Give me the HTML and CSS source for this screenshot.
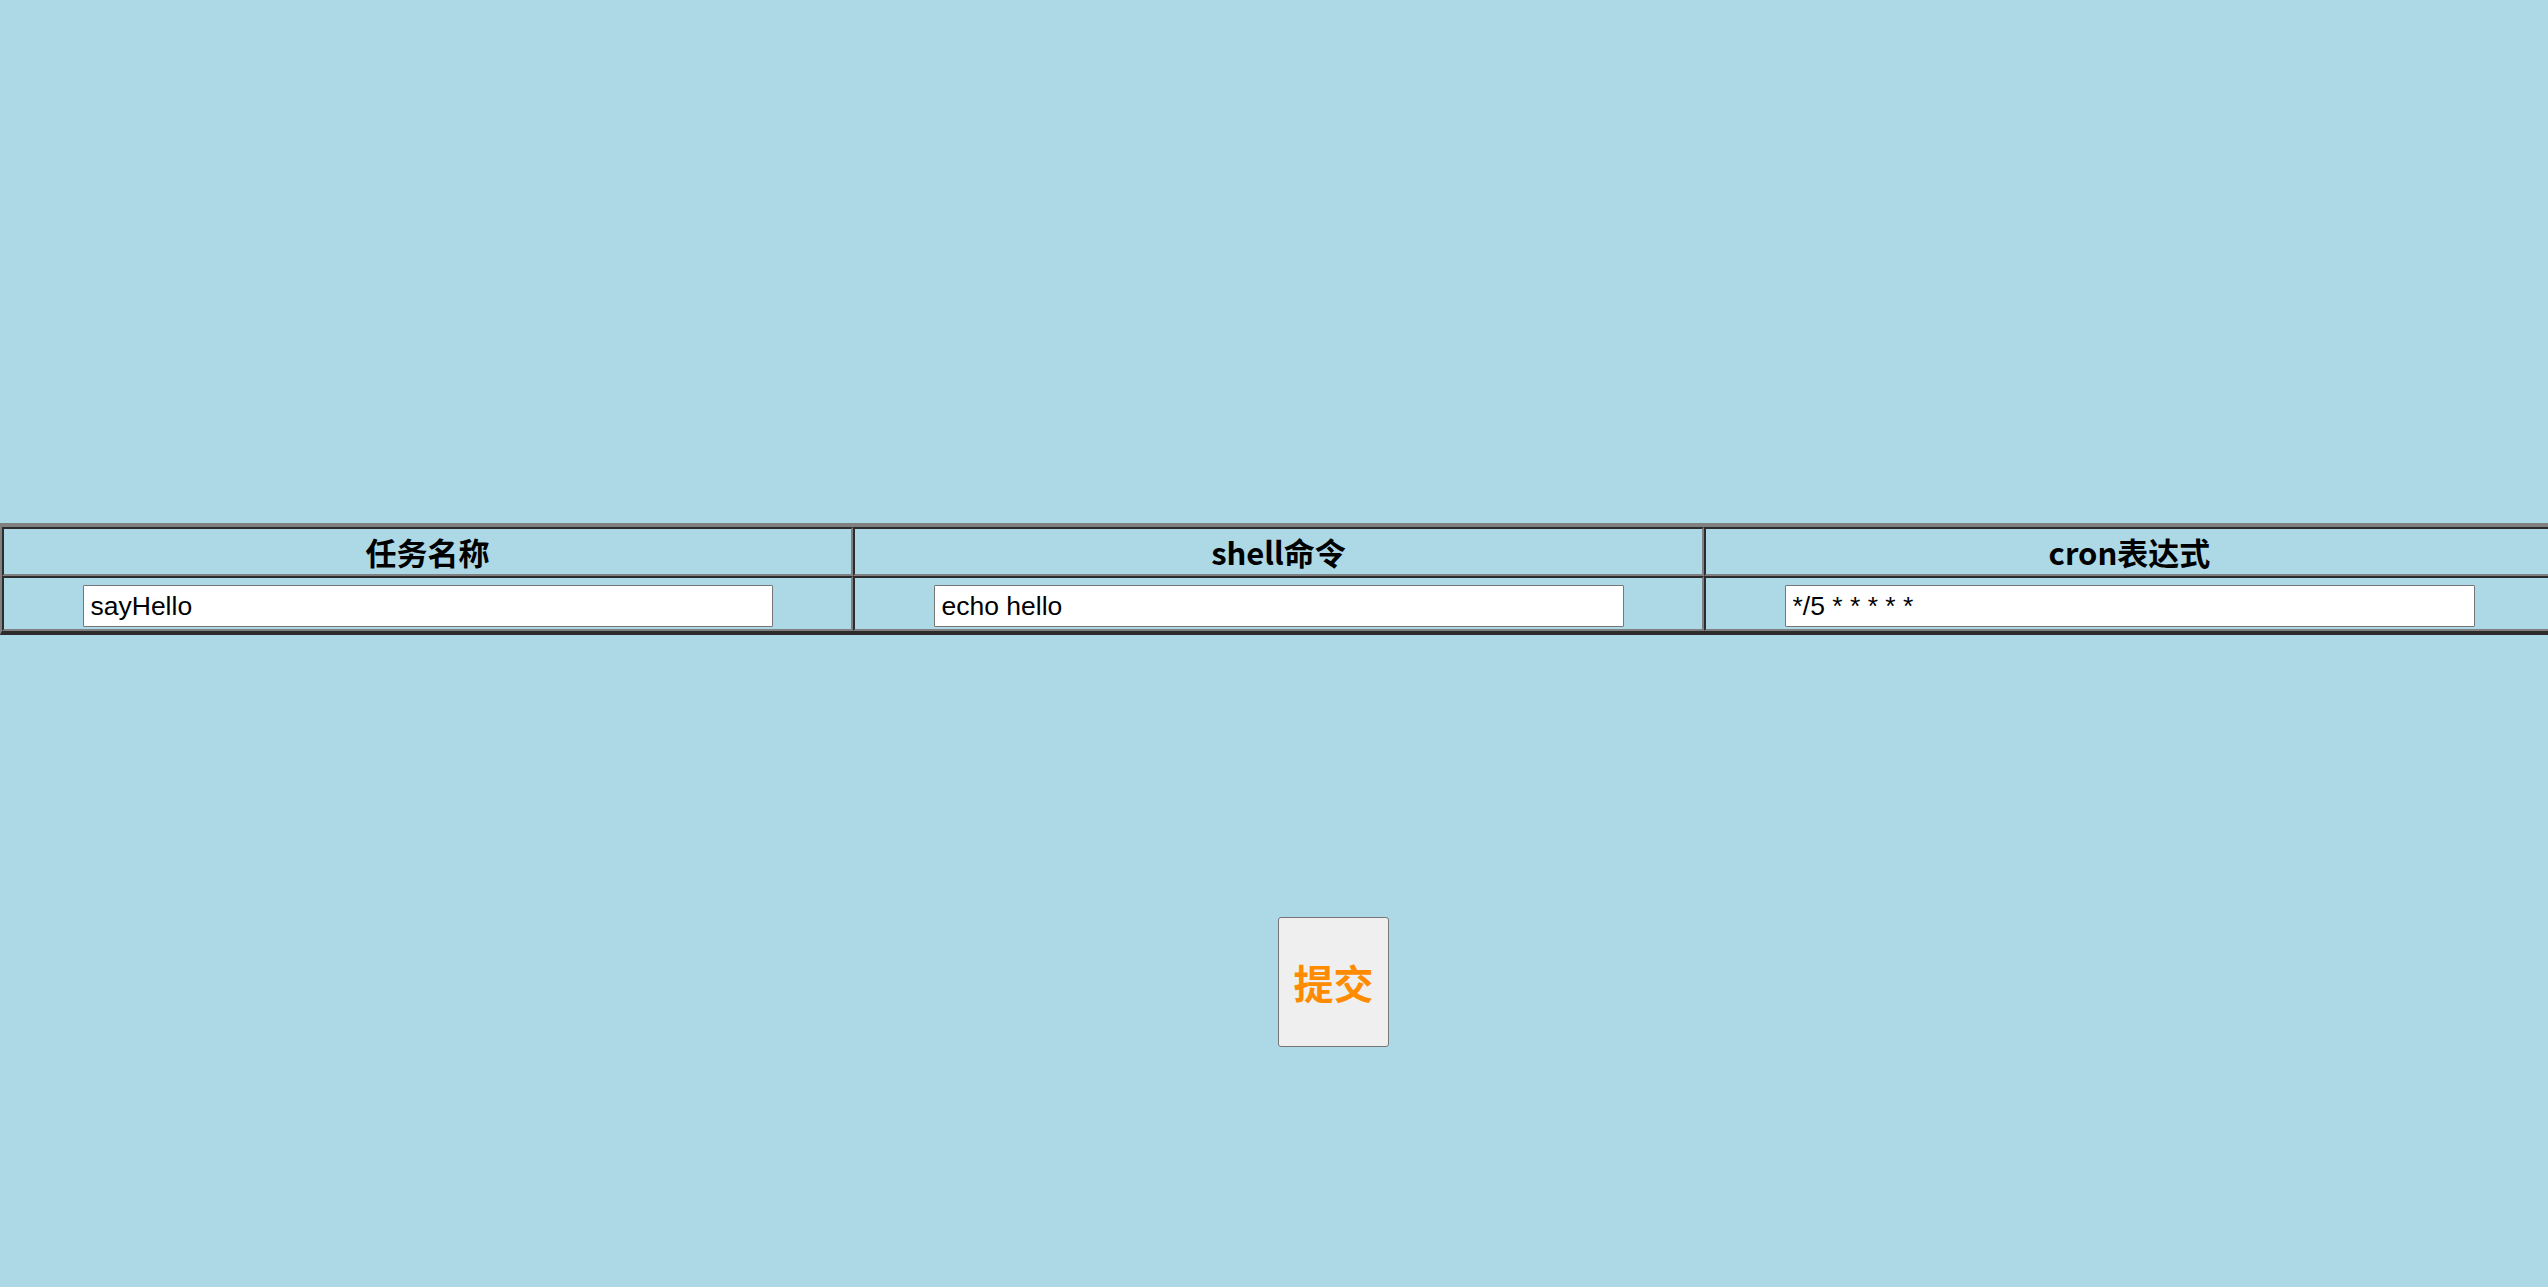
FILE: index.html
```html
<!DOCTYPE html>
<html lang="zh-CN">
<head>
<meta charset="utf-8">
<title>定时任务</title>
<link rel="stylesheet" href="styles.css">
</head>
<body>
<main class="page">
  <table class="task-table">
    <colgroup>
      <col class="col">
      <col class="col">
      <col class="col">
    </colgroup>
    <thead>
      <tr>
        <th>任务名称</th>
        <th>shell命令</th>
        <th>cron表达式</th>
      </tr>
    </thead>
    <tbody>
      <tr>
        <td><input class="field" type="text" value="sayHello"></td>
        <td><input class="field" type="text" value="echo hello"></td>
        <td><input class="field" type="text" value="*/5 * * * * *"></td>
      </tr>
    </tbody>
  </table>
  <div class="actions">
    <button class="submit" type="button">提交</button>
  </div>
</main>
</body>
</html>
```
FILE: styles.css
```css
html, body {
  margin: 0;
  padding: 0;
  overflow: hidden;
}
body {
  background: #add8e6;
  font-family: "Noto Sans CJK SC", "Noto Sans", sans-serif;
}
.page {
  padding-top: 523px;
}
.task-table {
  table-layout: fixed;
  width: 2559px;
  border-collapse: separate;
  border-spacing: 0;
  border-style: solid;
  border-width: 4px 4px 4px 2px;
  border-color: #808080 #2c2c2c #2c2c2c #808080;
}
.col {
  width: 851px;
}
.task-table th,
.task-table td {
  border-style: solid;
  border-width: 2px;
  border-color: #2c2c2c #808080 #808080 #2c2c2c;
  text-align: center;
}
.task-table th {
  padding: 0;
  height: 45px;
  line-height: 45px;
  font-size: 31px;
  font-weight: 700;
  color: #000;
  font-family: "Noto Sans CJK SC", "Noto Sans", sans-serif;
}
.task-table td {
  padding: 7px 0 2px;
  height: 42px;
  vertical-align: top;
}
.field {
  box-sizing: border-box;
  display: block;
  margin: 0 auto;
  width: 690px;
  height: 42px;
  padding: 0 7px;
  border: 1px solid #767676;
  border-radius: 1px;
  background: #fff;
  font-family: "Liberation Sans", Arial, sans-serif;
  font-size: 26.5px;
  color: #000;
}
.actions {
  padding-top: 282px;
  padding-left: 1278px;
}
.submit {
  box-sizing: border-box;
  width: 111px;
  height: 130px;
  padding: 0;
  border: 1px solid #767676;
  border-radius: 3px;
  background: #efefef;
  color: #ff8c00;
  font-family: "Noto Sans CJK SC", "Noto Sans", sans-serif;
  font-size: 40px;
  font-weight: 700;
}
```
